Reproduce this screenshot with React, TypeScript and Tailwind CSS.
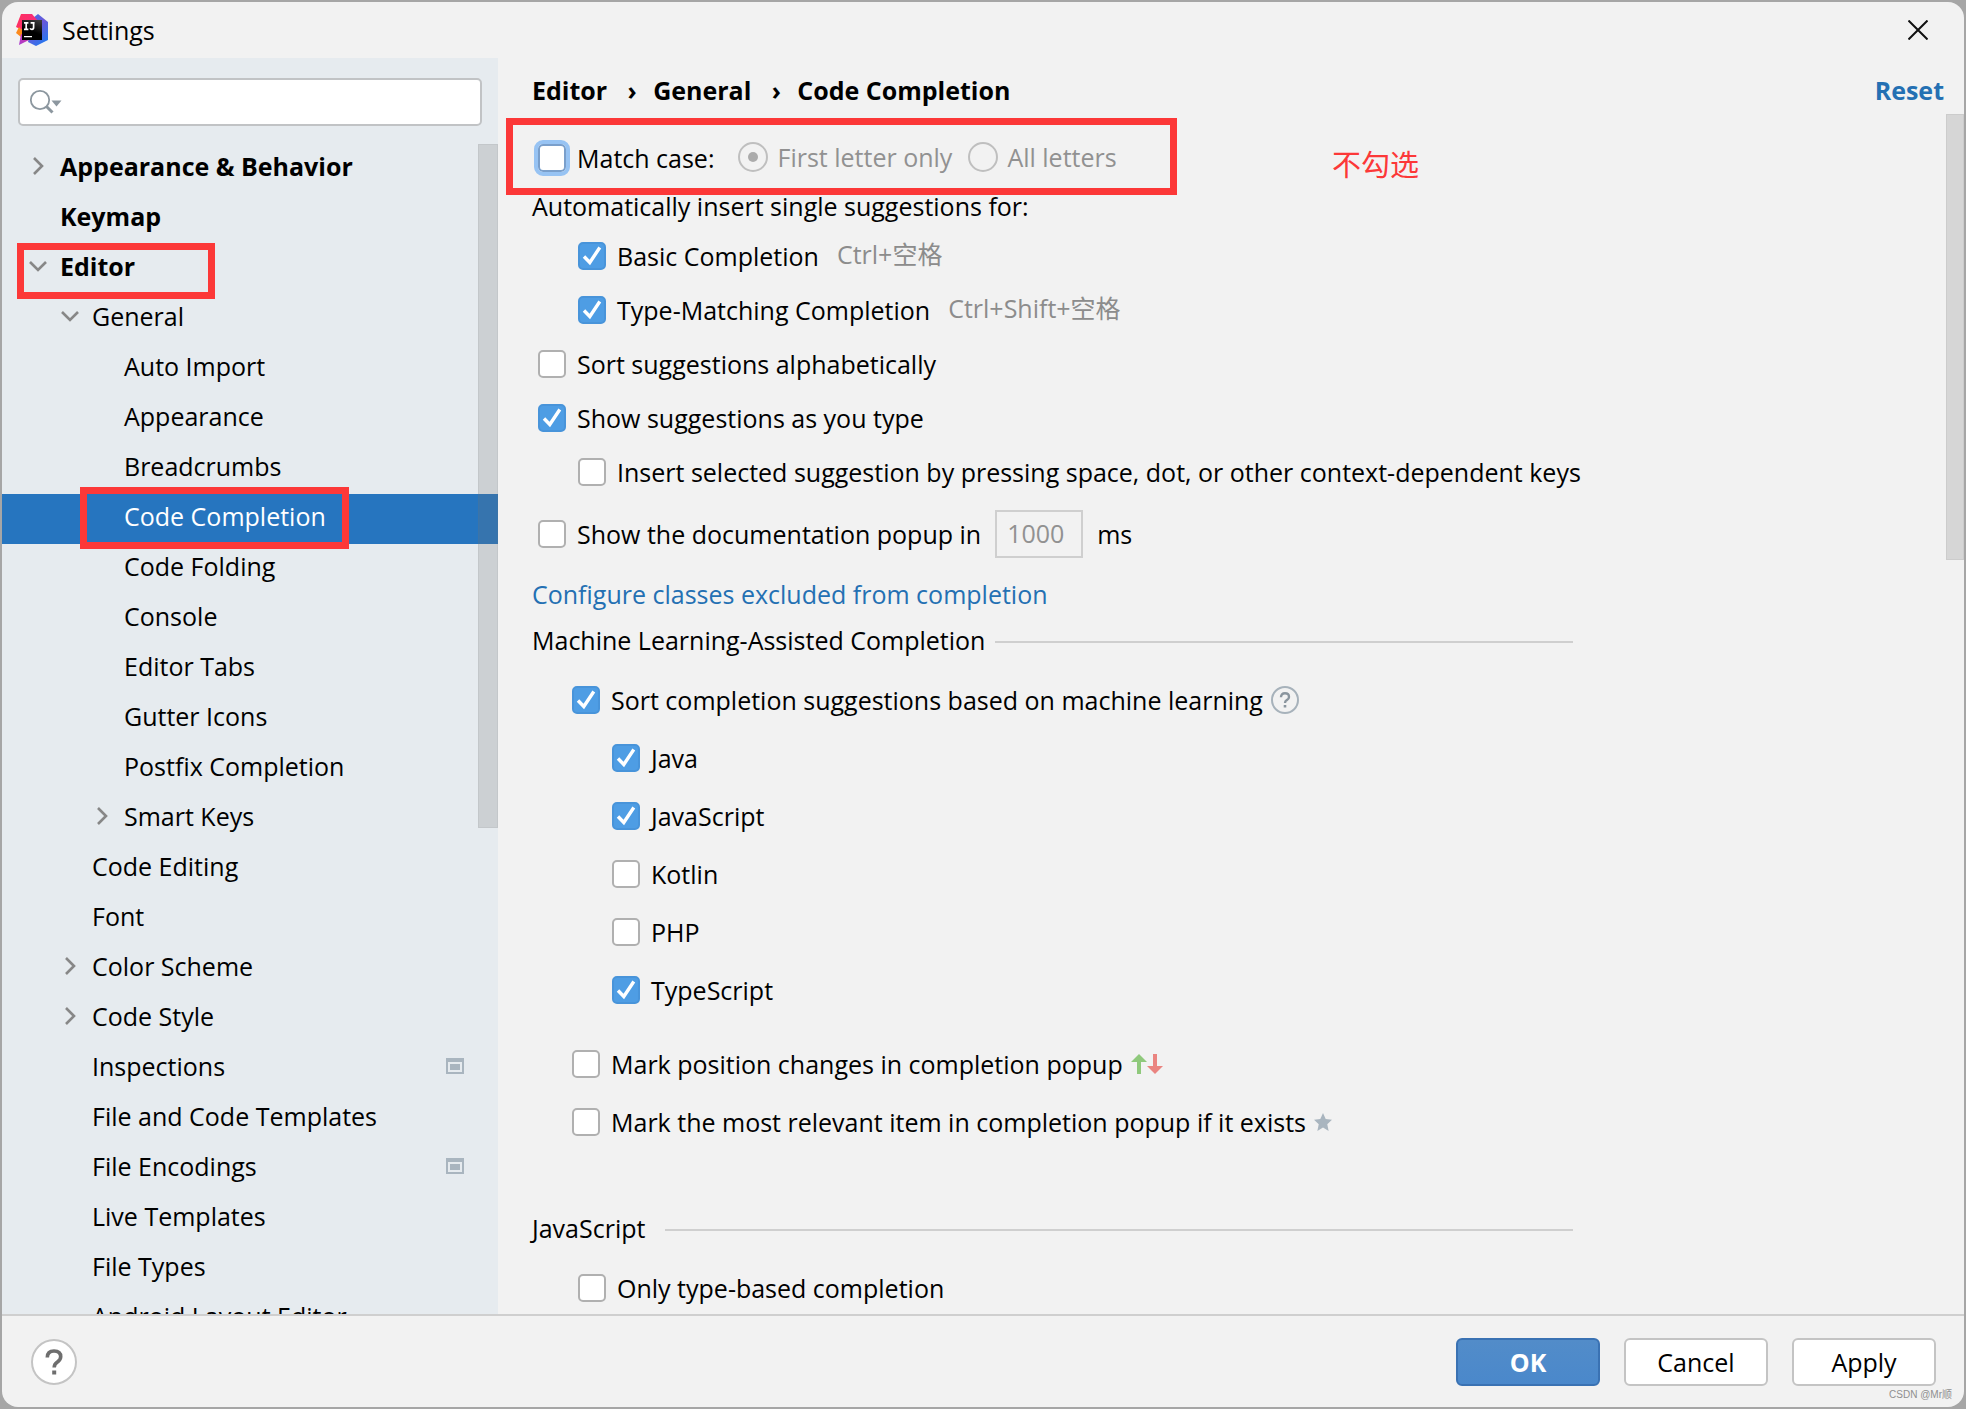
import React, { useId } from "react";

type TreeItem = {
  label: string;
  level: 0 | 1 | 2;
  chevron?: "right" | "down";
  bold?: boolean;
  selected?: boolean;
  projectLevel?: boolean;
  mark?: string;
};

const TREE: TreeItem[] = [
  { label: "Appearance & Behavior", level: 0, chevron: "right", bold: true },
  { label: "Keymap", level: 0, bold: true },
  { label: "Editor", level: 0, chevron: "down", bold: true, mark: "left-[15px] -top-px w-[198px] h-14" },
  { label: "General", level: 1, chevron: "down" },
  { label: "Auto Import", level: 2 },
  { label: "Appearance", level: 2 },
  { label: "Breadcrumbs", level: 2 },
  { label: "Code Completion", level: 2, selected: true, mark: "left-[78px] -top-[7px] w-[269px] h-[62px]" },
  { label: "Code Folding", level: 2 },
  { label: "Console", level: 2 },
  { label: "Editor Tabs", level: 2 },
  { label: "Gutter Icons", level: 2 },
  { label: "Postfix Completion", level: 2 },
  { label: "Smart Keys", level: 2, chevron: "right" },
  { label: "Code Editing", level: 1 },
  { label: "Font", level: 1 },
  { label: "Color Scheme", level: 1, chevron: "right" },
  { label: "Code Style", level: 1, chevron: "right" },
  { label: "Inspections", level: 1, projectLevel: true },
  { label: "File and Code Templates", level: 1 },
  { label: "File Encodings", level: 1, projectLevel: true },
  { label: "Live Templates", level: 1 },
  { label: "File Types", level: 1 },
  { label: "Android Layout Editor", level: 1 },
];

const INDENT = ["pl-6", "pl-14", "pl-[88px]"];

const LANGUAGES = [
  { label: "Java", on: true },
  { label: "JavaScript", on: true },
  { label: "Kotlin", on: false },
  { label: "PHP", on: false },
  { label: "TypeScript", on: true },
];

function AppLogo() {
  return (
    <svg viewBox="0 0 32 32" className="size-8" aria-hidden="true">
      <defs>
        <linearGradient id="logo-pink" x1="0" y1="0" x2="1" y2="0.3">
          <stop offset="0" stopColor="#fe315d" />
          <stop offset="1" stopColor="#f92c7c" />
        </linearGradient>
        <linearGradient id="logo-blue" x1="0" y1="0" x2="0.6" y2="1">
          <stop offset="0" stopColor="#3d73ea" />
          <stop offset="0.5" stopColor="#6b57d8" />
          <stop offset="1" stopColor="#2a76ee" />
        </linearGradient>
        <linearGradient id="logo-purple" x1="0" y1="1" x2="1" y2="0">
          <stop offset="0" stopColor="#a83bd0" />
          <stop offset="1" stopColor="#d6389c" />
        </linearGradient>
        <linearGradient id="logo-black" x1="0.8" y1="0" x2="0.4" y2="1">
          <stop offset="0" stopColor="#3a3a3a" />
          <stop offset="0.6" stopColor="#000" />
        </linearGradient>
      </defs>
      <path d="M22 0 32 8v18l-12 6-8-4 5-24z" fill="url(#logo-blue)" />
      <path d="M5 0h11l6 7-10 12-12-6z" fill="url(#logo-pink)" />
      <path d="M3 13 0 19l5 4 6-2z" fill="#fc8a1c" />
      <path d="M5 20 3 31l12-6z" fill="url(#logo-purple)" />
      <path d="M6 6h20v20H6z" fill="url(#logo-black)" />
      <path d="M8 8.8h4.4M10.2 8.8v6.6M8 15.4h4.4M14.6 8.8h4M17.6 8.8v4.8q0 1.8-1.7 1.8-1.3 0-1.9-1" fill="none" stroke="#fff" strokeWidth="1.7" />
      <path d="M8 22.6h8" stroke="#fff" strokeWidth="1.4" />
    </svg>
  );
}

function Chevron({ kind }: { kind?: "right" | "down" }) {
  return (
    <svg viewBox="0 0 24 24" className="size-6 shrink-0" fill="none" stroke="#878787" strokeWidth="2.6" aria-hidden="true">
      {kind === "right" && <path d="M8 4l8 8-8 8" />}
      {kind === "down" && <path d="M4 8l8 8 8-8" />}
    </svg>
  );
}

function Check({ children, on = false, focused = false }: { children: React.ReactNode; on?: boolean; focused?: boolean }) {
  const id = useId();
  return (
    <div className="flex items-center gap-[11px]">
      <span className="grid size-7 shrink-0">
        <input
          id={id}
          type="checkbox"
          defaultChecked={on}
          className={
            focused
              ? "peer col-start-1 row-start-1 size-7 appearance-none rounded-[5px] border-2 border-[#7a9fcb] bg-white outline-4 outline-[#97c3f3] checked:bg-[#4e9de4]"
              : "peer col-start-1 row-start-1 size-7 appearance-none rounded-[5px] border-2 border-[#b0b0b0] bg-white checked:border-[#4894da] checked:bg-[#4e9de4]"
          }
        />
        <svg viewBox="0 0 28 28" className="pointer-events-none invisible col-start-1 row-start-1 size-7 peer-checked:visible" fill="none" stroke="#fff" strokeWidth="3.4" aria-hidden="true">
          <path d="M6 14.5l5.8 6L21.8 5.5" />
        </svg>
      </span>
      <label htmlFor={id} className="whitespace-nowrap">{children}</label>
    </div>
  );
}

function Radio({ label, on = false }: { label: string; on?: boolean }) {
  return (
    <label className="flex items-center gap-[9px] whitespace-nowrap text-[#919191]">
      <span className="grid size-[30px] place-items-center">
        <input
          type="radio"
          name="match-case"
          disabled
          defaultChecked={on}
          className="peer col-start-1 row-start-1 size-[30px] appearance-none rounded-full border-2 border-[#bfbfbf]"
        />
        <span className="invisible col-start-1 row-start-1 size-2.5 rounded-full bg-[#ababab] peer-checked:visible" />
      </span>
      {label}
    </label>
  );
}

function SectionTitle({ children, wide = false }: { children: React.ReactNode; wide?: boolean }) {
  return (
    <div className={wide ? "flex h-[42px] items-center gap-5" : "flex h-[42px] items-center gap-2.5"}>
      <h2 className="whitespace-nowrap">{children}</h2>
      <hr className="mt-1 flex-1 border-t-2 border-[#cfcfcf]" />
    </div>
  );
}

function Sidebar() {
  return (
    <aside className="flex w-[496px] shrink-0 flex-col bg-[#e6ebef]">
      <label className="mx-4 mt-5 flex h-12 shrink-0 items-center rounded-[5px] border-2 border-[#c1c3c5] bg-white pl-[9px]">
        <svg viewBox="0 0 34 26" className="h-[26px] w-[34px] shrink-0" fill="none" stroke="#8c979f" aria-label="Search">
          <circle cx="11" cy="11" r="9.2" strokeWidth="1.8" />
          <path d="M17.5 17.5l6 6" strokeWidth="3" />
          <path d="M22.500 11.500h10l-5 6z" fill="#8c979f" stroke="none" />
        </svg>
        <input type="text" aria-label="Search settings" className="min-w-0 flex-1 outline-none" />
      </label>
      <div className="relative mt-[18px] min-h-0 flex-1 overflow-hidden">
        <ul>
          {TREE.map((t) => (
            <li key={t.label} className="relative">
              <button
                type="button"
                className={[
                  "flex h-[50px] w-full items-center gap-2.5 pb-1.5 text-left whitespace-nowrap",
                  INDENT[t.level],
                  t.bold ? "font-bold" : "",
                  t.selected ? "bg-[#2675bf] text-white" : "",
                ].join(" ")}
              >
                <Chevron kind={t.chevron} />
                {t.label}
                {t.projectLevel && (
                  <svg viewBox="0 0 18 16" className="mr-[34px] ml-auto h-4 w-[18px]" aria-hidden="true">
                    <path d="M0 0h18v16H0zM2 4v10h14V4z" fill="#a9b5bf" fillRule="evenodd" />
                    <path d="M4 6h10v6H4z" fill="#a9b5bf" />
                  </svg>
                )}
              </button>
              {t.mark && <span className={"pointer-events-none absolute z-10 border-[7px] border-[#fc3838] " + t.mark} />}
            </li>
          ))}
        </ul>
        <div className="absolute top-0 right-0 h-[684px] w-5 border border-[#73737318] bg-[#73737338]" />
      </div>
    </aside>
  );
}

function Content() {
  return (
    <main className="flex min-w-0 flex-1 flex-col">
      <header className="flex h-14 shrink-0 items-center justify-between pt-2 pr-5 pl-[34px] font-bold">
        <nav aria-label="Breadcrumb" className="flex">
          <span>Editor</span>
          <span className="w-[46px] pl-1 text-center">›</span>
          <span>General</span>
          <span className="w-[46px] pl-1 text-center">›</span>
          <span>Code Completion</span>
        </nav>
        <a href="#reset" className="text-[#2470b3]">Reset</a>
      </header>

      <div className="relative min-h-0 flex-1 overflow-hidden pl-[34px]">
        <div className="max-w-[1041px]">
          <div className="relative mt-[19px] flex h-[50px] items-center pl-1.5">
            <Check focused>Match case:</Check>
            <div className="ml-6 flex gap-4 pb-0.5">
              <Radio label="First letter only" on />
              <Radio label="All letters" />
            </div>
            <span className="pointer-events-none absolute -top-[15px] -left-[26px] h-[77px] w-[671px] border-[7px] border-[#fc3838]" />
            <span className="absolute top-3 left-[800px] font-['Noto_Sans_CJK_SC',sans-serif] text-[29px] leading-9 whitespace-nowrap text-[#fc3838]">不勾选</span>
          </div>
          <p className="flex h-[46px] items-center">Automatically insert single suggestions for:</p>
          <div className="flex h-[54px] items-center gap-[18px] pl-[46px]">
            <Check on>Basic Completion</Check>
            <span className="pb-1 text-[#8c8c8c]">Ctrl+空格</span>
          </div>
          <div className="flex h-[54px] items-center gap-[18px] pl-[46px]">
            <Check on>Type-Matching Completion</Check>
            <span className="pb-1 text-[#8c8c8c]">Ctrl+Shift+空格</span>
          </div>
          <div className="flex h-[54px] items-center pl-1.5">
            <Check>Sort suggestions alphabetically</Check>
          </div>
          <div className="flex h-[54px] items-center pl-1.5">
            <Check on>Show suggestions as you type</Check>
          </div>
          <div className="flex h-[54px] items-center pl-[46px]">
            <Check>Insert selected suggestion by pressing space, dot, or other context-dependent keys</Check>
          </div>
          <div className="flex h-[70px] items-center gap-3.5 pl-1.5">
            <Check>Show the documentation popup in</Check>
            <input
              type="text"
              disabled
              defaultValue="1000"
              aria-label="Popup delay in milliseconds"
              className="h-12 w-[88px] border-2 border-[#cfcfcf] pb-0.5 pl-2.5 text-[#919191]"
            />
            <span>ms</span>
          </div>
          <p className="flex h-[50px] items-center">
            <a href="#excluded" className="text-[#2470b3]">Configure classes excluded from completion</a>
          </p>

          <SectionTitle>Machine Learning-Assisted Completion</SectionTitle>
          <div className="mt-2.5 flex h-[58px] items-center gap-2 pl-10">
            <Check on>Sort completion suggestions based on machine learning</Check>
            <svg viewBox="0 0 28 28" className="size-7" fill="none" stroke="#a7b2bb" aria-label="Help">
              <circle cx="14" cy="14" r="13" strokeWidth="2" />
              <path d="M10 11.300q0-4 4-4t4 3.600q0 2-2.200 3.200-1.800 1.100-1.800 3" stroke="#8a959e" strokeWidth="2.400" />
              <path d="M12.700 19h2.600v2.600h-2.600z" fill="#8a959e" stroke="none" />
            </svg>
          </div>
          {LANGUAGES.map((l) => (
            <div key={l.label} className="flex h-[58px] items-center pl-20">
              <Check on={l.on}>{l.label}</Check>
            </div>
          ))}
          <div className="mt-4 flex h-[58px] items-center gap-2 pl-10">
            <Check>Mark position changes in completion popup</Check>
            <svg viewBox="0 0 32 20" className="h-5 w-8" aria-hidden="true">
              <path d="M8 0l8 8h-6v12H6V8H0z" fill="#8fc97c" />
              <path d="M24 20l8-8h-6V0h-4v12h-6z" fill="#ea8480" />
            </svg>
          </div>
          <div className="flex h-[58px] items-center gap-2 pl-10">
            <Check>Mark the most relevant item in completion popup if it exists</Check>
            <svg viewBox="0 0 16 16" className="size-[18px]" aria-hidden="true">
              <path d="M8 0l2.400 5.400 5.600.5-4.200 4L13 16l-5-3.200L3 16l1.200-6.100L0 5.900l5.600-.5z" fill="#a9b5bf" />
            </svg>
          </div>

          <div className="mt-14">
            <SectionTitle wide>JavaScript</SectionTitle>
          </div>
          <div className="mt-3 flex h-[54px] items-center pl-[46px]">
            <Check>Only type-based completion</Check>
          </div>
        </div>
        <div className="absolute top-0 right-0 h-[446px] w-[18px] border border-[#73737318] bg-[#73737338]" />
      </div>
    </main>
  );
}

export default function App() {
  return (
    <div className="flex h-screen bg-[#a6a6a6] p-0.5 font-['Open_Sans','Noto_Sans_CJK_SC',sans-serif] text-[25px] leading-9 text-black">
      <div className="relative flex min-w-0 flex-1 flex-col overflow-hidden rounded-2xl bg-[#f2f2f2]">
        <div className="flex h-14 shrink-0 items-center gap-3.5 pr-9 pl-3.5">
          <AppLogo />
          <h1>Settings</h1>
          <button type="button" aria-label="Close" className="ml-auto">
            <svg viewBox="0 0 20 20" className="size-5" stroke="#111" strokeWidth="2" aria-hidden="true">
              <path d="M.5.500l19 19M19.500.500l-19 19" />
            </svg>
          </button>
        </div>

        <div className="flex min-h-0 flex-1">
          <Sidebar />
          <Content />
        </div>

        <footer className="flex h-[93px] shrink-0 items-center gap-6 border-t-2 border-[#cfcfcf] pr-7 pl-[29px]">
          <button type="button" aria-label="Help" className="mr-auto grid size-[46px] place-items-center rounded-full border-2 border-[#c4c4c4] bg-white">
            <svg viewBox="0 0 18 26" className="h-[26px] w-[18px]" fill="none" stroke="#6e6e6e" strokeWidth="3.600" aria-hidden="true">
              <path d="M2.300 8.500q0-6.500 6.700-6.500t6.700 5.800q0 2.800-3.300 5.200-3.200 2.200-3.200 5.500" />
              <path d="M7.200 21.500h4v4h-4z" fill="#6e6e6e" stroke="none" />
            </svg>
          </button>
          <button type="button" className="h-12 w-36 rounded-md border-2 border-[#3a72b3] bg-linear-to-b from-[#528cc9] to-[#4a88cb] font-bold text-white">OK</button>
          <button type="button" className="h-12 w-36 rounded-md border-2 border-[#c4c4c4] bg-white">Cancel</button>
          <button type="button" className="h-12 w-36 rounded-md border-2 border-[#c4c4c4] bg-white">Apply</button>
        </footer>
        <span className="absolute right-3 bottom-1 font-['Liberation_Sans','Noto_Sans_CJK_SC',sans-serif] text-[10px] leading-4 text-[#8f8f8f]">CSDN @Mr顺</span>
      </div>
    </div>
  );
}
